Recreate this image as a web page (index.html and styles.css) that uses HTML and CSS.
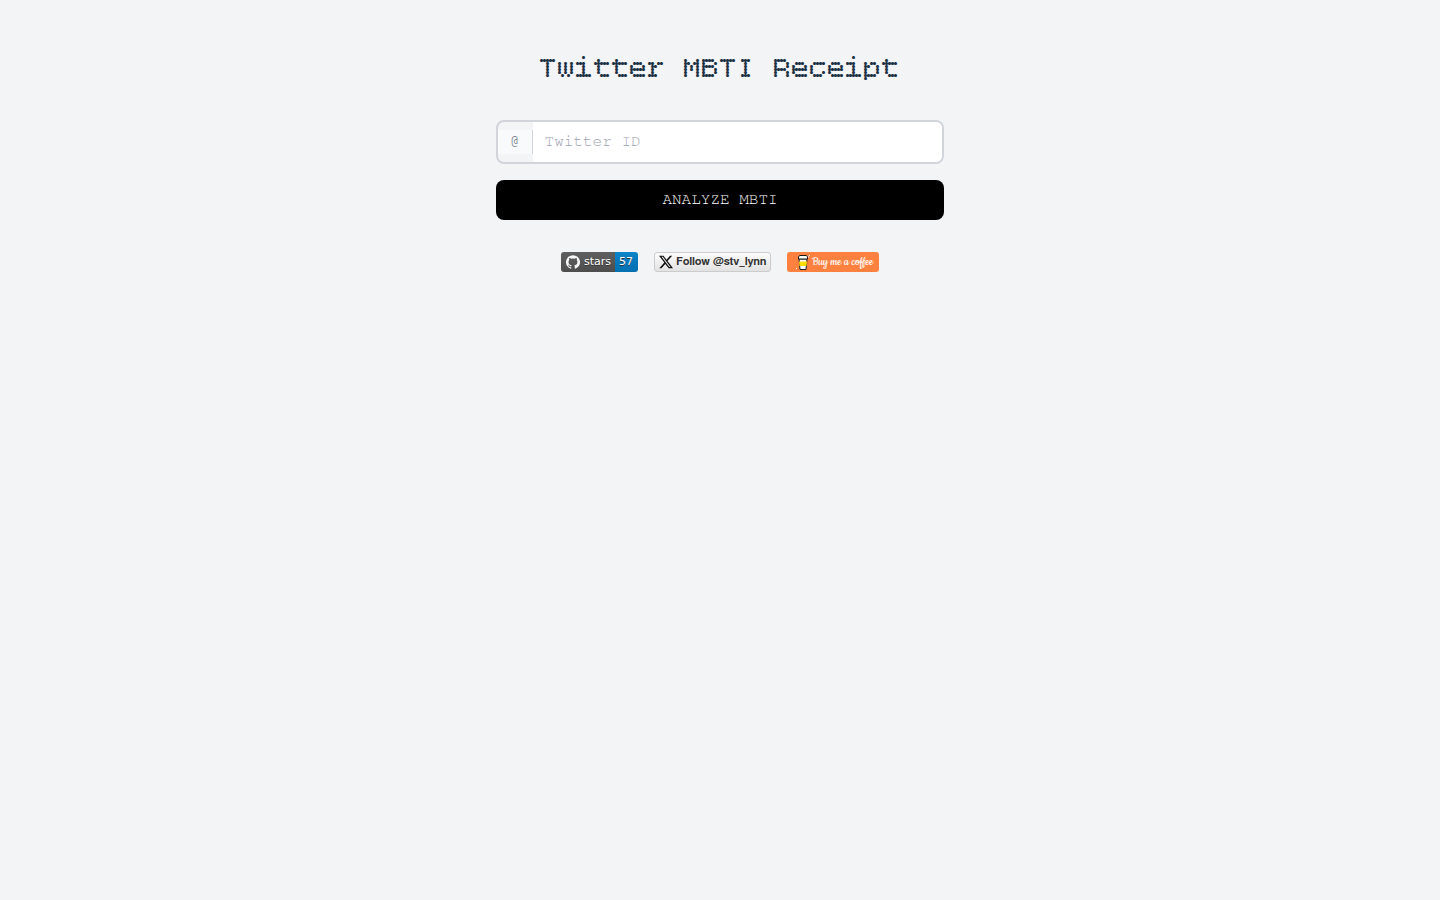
FILE: index.html
```html
<!DOCTYPE html>
<html lang="en">
<head>
<meta charset="utf-8">
<meta name="viewport" content="width=device-width, initial-scale=1">
<title>Twitter MBTI Receipt</title>
<link rel="stylesheet" href="styles.css">
</head>
<body>
<main class="page">
  <h1 class="title">Twitter MBTI Receipt</h1>
  <form class="form">
    <div class="field">
      <label class="prefix" for="handle">@</label>
      <input class="input" id="handle" type="text" placeholder="Twitter ID">
    </div>
    <button class="submit" type="button">ANALYZE MBTI</button>
  </form>
  <nav class="badges">
    <a class="badge stars" href="#">
      <span class="stars-label">
        <svg width="14" height="14" viewBox="0 0 24 24" aria-hidden="true"><path fill="#f5f5f5" d="M12 .3a12 12 0 0 0-3.800 23.400c.6.1.8-.3.8-.6v-2.100c-3.300.7-4-1.600-4-1.600-.6-1.400-1.400-1.800-1.400-1.800-1-.7.1-.7.1-.7 1.200.1 1.900 1.200 1.900 1.200 1 1.800 2.800 1.300 3.500 1 .1-.8.4-1.300.7-1.600-2.700-.3-5.500-1.300-5.500-5.900 0-1.300.5-2.400 1.300-3.200-.2-.4-.6-1.600.1-3.200 0 0 1-.3 3.300 1.200a11.500 11.500 0 0 1 6 0C17.300 4.900 18.300 5.200 18.300 5.200c.7 1.600.2 2.800.1 3.200.8.800 1.200 1.900 1.200 3.200 0 4.600-2.800 5.600-5.500 5.900.5.400.9 1.100.9 2.200v3.400c0 .3.200.7.800.6A12 12 0 0 0 12 .3z"/></svg>
        <span>stars</span>
      </span>
      <span class="stars-count">57</span>
    </a>
    <a class="badge follow" href="#">
      <svg width="14" height="14" viewBox="0 0 24 24" aria-hidden="true"><path fill="#111" d="M18.900 1.200h3.700l-8 9.200L24 22.800h-7.400l-5.800-7.500-6.600 7.500H.5l8.600-9.800L0 1.200h7.600l5.200 6.900zM17.600 20.600h2L6.500 3.200H4.300z"/></svg>
      <span>Follow @stv_lynn</span>
    </a>
    <a class="badge coffee" href="#">
      <svg width="14" height="16" viewBox="0 0 14 16" aria-hidden="true">
        <path fill="#fff" stroke="#1a1a1a" d="M3 5h8l-1 10.500h-6z"/>
        <path fill="#ffdd00" d="M3 7.500h8l-.5 4.500h-7z"/>
        <path fill="#fff" stroke="#1a1a1a" d="M2.500 3l1-1.500h7l1 1.500v2h-9z"/>
        <path stroke="#fff" d="M0 14.500h1M13 1.500h1M12 3h1"/>
      </svg>
      <span>Buy me a coffee</span>
    </a>
  </nav>
</main>
</body>
</html>
```
FILE: styles.css
```css
* {
  box-sizing: border-box;
}

body {
  margin: 0;
  min-height: 100vh;
  background: #f3f4f6;
  font-family: "Nimbus Mono PS", "Nimbus Mono L", FreeMono, "Liberation Mono", monospace;
}

.page {
  max-width: 480px;
  margin: 0 auto;
  padding: 48px 16px;
}

.title {
  margin: 0 0 28px;
  text-align: center;
  font: 400 30px/44px "Bitcount Single", "Bitcount Mono", "DejaVu Sans Mono", monospace;
  color: #1f3347;
}

.form {
  display: flex;
  flex-direction: column;
  gap: 16px;
}

.field {
  display: flex;
  align-items: center;
  height: 44px;
  overflow: hidden;
  border: 2px solid #d1d5db;
  border-radius: 8px;
  background: #f3f4f6;
}

.prefix {
  padding: 0 12px 2px;
  border-right: 1px solid #d1d5db;
  background: #f9fafb;
  color: #6b7280;
  font-size: 16px;
  line-height: 22px;
}

.input {
  flex: 1;
  min-width: 0;
  align-self: stretch;
  padding: 0 12px 2px;
  border: 0;
  outline: 0;
  background: #fff;
  color: #111827;
  font: inherit;
  font-size: 16px;
}

.input::placeholder {
  color: #9ca3af;
}

.submit {
  height: 40px;
  padding: 0 0 2px;
  border: 0;
  border-radius: 8px;
  background: #000;
  color: #fff;
  font: inherit;
  font-size: 16px;
}

.badges {
  display: flex;
  justify-content: center;
  gap: 16px;
  margin-top: 32px;
}

.badge {
  display: flex;
  align-items: center;
  height: 20px;
  overflow: hidden;
  border-radius: 3px;
  text-decoration: none;
  white-space: nowrap;
}

.stars {
  color: #fff;
  font: 11px/20px "DejaVu Sans", sans-serif;
  text-shadow: 0 1px 0 #333;
}

.stars-label {
  display: flex;
  align-items: center;
  gap: 4px;
  padding: 0 4px 0 5px;
  background: linear-gradient(#5f5f5f, #4d4d4d);
}

.stars-count {
  padding: 0 5px 0 4px;
  background: linear-gradient(#0d83c9, #0070b0);
}

.follow {
  gap: 3px;
  width: 117px;
  padding: 0 0 0 4px;
  border: 1px solid #ccc;
  background: linear-gradient(#fcfcfc, #e2e2e2);
  color: #333;
  font: bold 11px/20px FreeSans, "Liberation Sans", sans-serif;
}

.coffee {
  gap: 2px;
  width: 92px;
  padding: 0 5px 0 9px;
  background: #ff813f;
  color: #fff;
  font: 13px/20px Cookie, "Dancing Script", "Liberation Serif", cursive;
}
```
